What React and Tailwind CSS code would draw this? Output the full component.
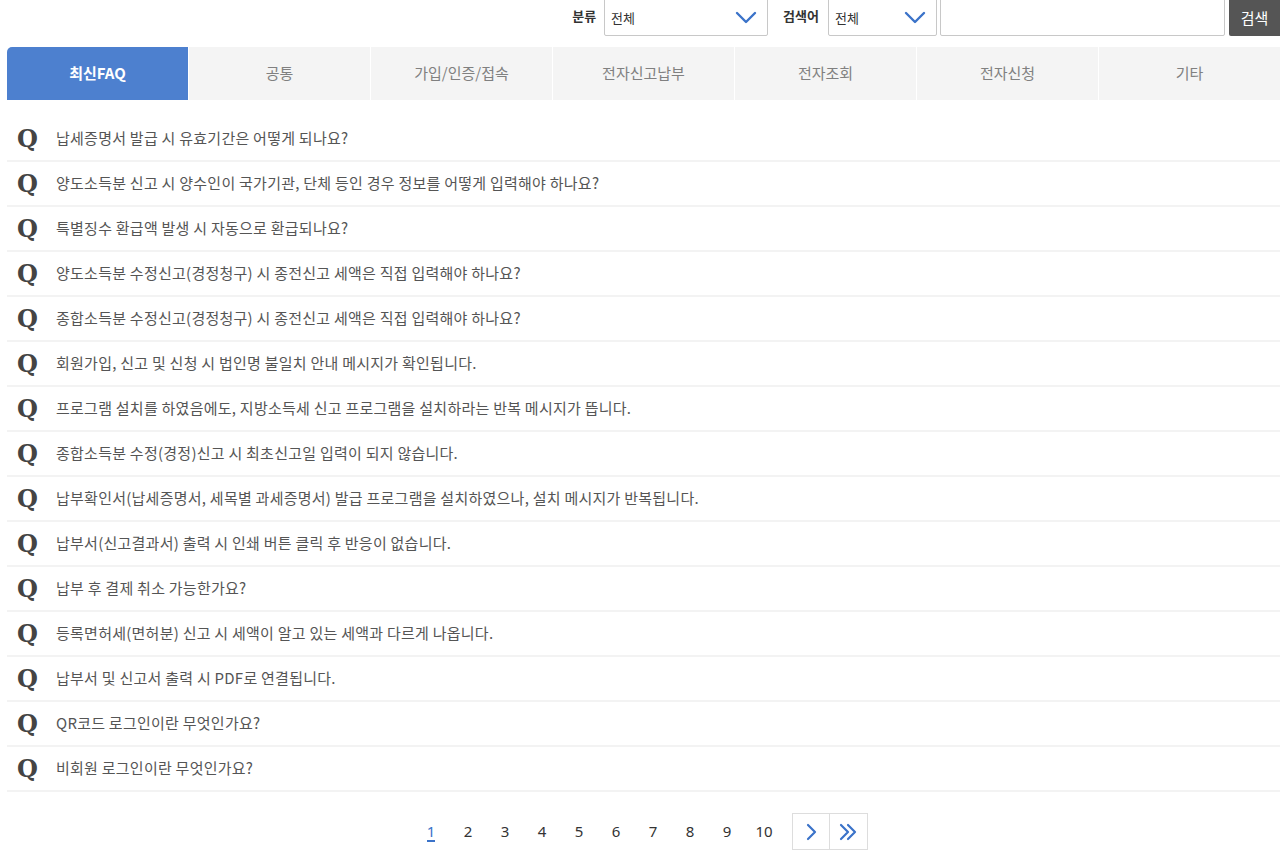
import React from "react";

const font = { fontFamily: '"Noto Sans CJK KR", "Noto Sans", sans-serif' };

const tabs = ["최신FAQ", "공통", "가입/인증/접속", "전자신고납부", "전자조회", "전자신청", "기타"];

const faqs = [
  "납세증명서 발급 시 유효기간은 어떻게 되나요?",
  "양도소득분 신고 시 양수인이 국가기관, 단체 등인 경우 정보를 어떻게 입력해야 하나요?",
  "특별징수 환급액 발생 시 자동으로 환급되나요?",
  "양도소득분 수정신고(경정청구) 시 종전신고 세액은 직접 입력해야 하나요?",
  "종합소득분 수정신고(경정청구) 시 종전신고 세액은 직접 입력해야 하나요?",
  "회원가입, 신고 및 신청 시 법인명 불일치 안내 메시지가 확인됩니다.",
  "프로그램 설치를 하였음에도, 지방소득세 신고 프로그램을 설치하라는 반복 메시지가 뜹니다.",
  "종합소득분 수정(경정)신고 시 최초신고일 입력이 되지 않습니다.",
  "납부확인서(납세증명서, 세목별 과세증명서) 발급 프로그램을 설치하였으나, 설치 메시지가 반복됩니다.",
  "납부서(신고결과서) 출력 시 인쇄 버튼 클릭 후 반응이 없습니다.",
  "납부 후 결제 취소 가능한가요?",
  "등록면허세(면허분) 신고 시 세액이 알고 있는 세액과 다르게 나옵니다.",
  "납부서 및 신고서 출력 시 PDF로 연결됩니다.",
  "QR코드 로그인이란 무엇인가요?",
  "비회원 로그인이란 무엇인가요?",
];

function Chevron({ className = "" }) {
  return (
    <svg width="22" height="14" viewBox="0 0 22 14" className={className}>
      <path d="M2 2 L11 11 L20 2" fill="none" stroke="#3b73c9" strokeWidth="2.4" strokeLinecap="round" strokeLinejoin="round" />
    </svg>
  );
}

export default function App() {
  return (
    <div className="w-[1280px] h-[853px] overflow-hidden bg-white text-[#333]" style={font}>
      {/* top search bar */}
      <div className="flex items-center justify-end h-[40px] -mt-[4px]">
        <span className="text-[13px] font-bold text-[#333] mr-[8px]">분류</span>
        <div className="w-[164px] h-[40px] border border-[#c8c8c8] rounded-[2px] flex items-center justify-between pl-[6px] pr-[10px]">
          <span className="text-[13px] text-[#333] pt-[4px]">전체</span>
          <Chevron className="mt-[4px]" />
        </div>
        <span className="text-[13px] font-bold text-[#333] ml-[15px] mr-[9px]">검색어</span>
        <div className="w-[109px] h-[40px] border border-[#c8c8c8] rounded-[2px] flex items-center justify-between pl-[6px] pr-[10px]">
          <span className="text-[13px] text-[#333] pt-[4px]">전체</span>
          <Chevron className="mt-[4px]" />
        </div>
        <div className="w-[285px] h-[40px] border border-[#c8c8c8] rounded-[2px] ml-[3px]" />
        <button className="w-[51px] h-[40px] ml-[4px] bg-[#555555] text-white text-[15px] rounded-l-[2px] flex items-center justify-center pt-[4px]">
          검색
        </button>
      </div>

      {/* tabs */}
      <div className="pl-[7px] mt-[11px]">
        <div className="grid grid-cols-7 gap-px bg-white h-[53px]">
          {tabs.map((t, i) => (
            <div
              key={t}
              className={
                i === 0
                  ? "bg-[#4d80cf] text-white font-semibold text-[15px] flex items-center justify-center rounded-tl-[5px]"
                  : "bg-[#f4f4f4] text-[#808080] text-[15px] flex items-center justify-center"
              }
            >
              {t}
            </div>
          ))}
        </div>
      </div>

      {/* list */}
      <ul className="pl-[7px] mt-[17px]">
        {faqs.map((q) => (
          <li key={q} className="h-[45px] border-b-2 border-[#f3f3f3] flex items-center">
            <span
              className="w-[49px] pl-[10px] text-[24px] font-bold text-[#444]"
              style={{ fontFamily: '"DejaVu Serif", "Liberation Serif", serif' }}
            >
              Q
            </span>
            <span className="text-[15px] tracking-[0.25px] text-[#555]">{q}</span>
          </li>
        ))}
      </ul>

      {/* pagination */}
      <div className="flex justify-center items-center mt-[21px]">
        <div className="flex items-center" style={{ fontFamily: '"Noto Sans", sans-serif' }}>
          {[1, 2, 3, 4, 5, 6, 7, 8, 9, 10].map((n) => (
            <span
              key={n}
              className={
                n === 1
                  ? "w-[37px] text-center text-[15px] text-[#3b73c9]"
                  : "w-[37px] text-center text-[15px] text-[#333]"
              }
            >
              {n === 1 ? <span className="border-b-2 border-[#3b73c9] leading-[18px] inline-block">1</span> : n}
            </span>
          ))}
        </div>
        <div className="flex ml-[9px]">
          <div className="w-[38px] h-[37px] border border-[#ddd] flex items-center justify-center">
            <svg width="12" height="18" viewBox="0 0 12 18">
              <path d="M3 2 L10 9 L3 16" fill="none" stroke="#3b73c9" strokeWidth="2.2" strokeLinecap="round" strokeLinejoin="round" />
            </svg>
          </div>
          <div className="w-[38px] h-[37px] border border-l-0 border-[#ddd] flex items-center justify-center">
            <svg width="20" height="18" viewBox="0 0 20 18">
              <path d="M3 2 L10 9 L3 16 M10 2 L17 9 L10 16" fill="none" stroke="#3b73c9" strokeWidth="2.2" strokeLinecap="round" strokeLinejoin="round" />
            </svg>
          </div>
        </div>
      </div>
    </div>
  );
}
